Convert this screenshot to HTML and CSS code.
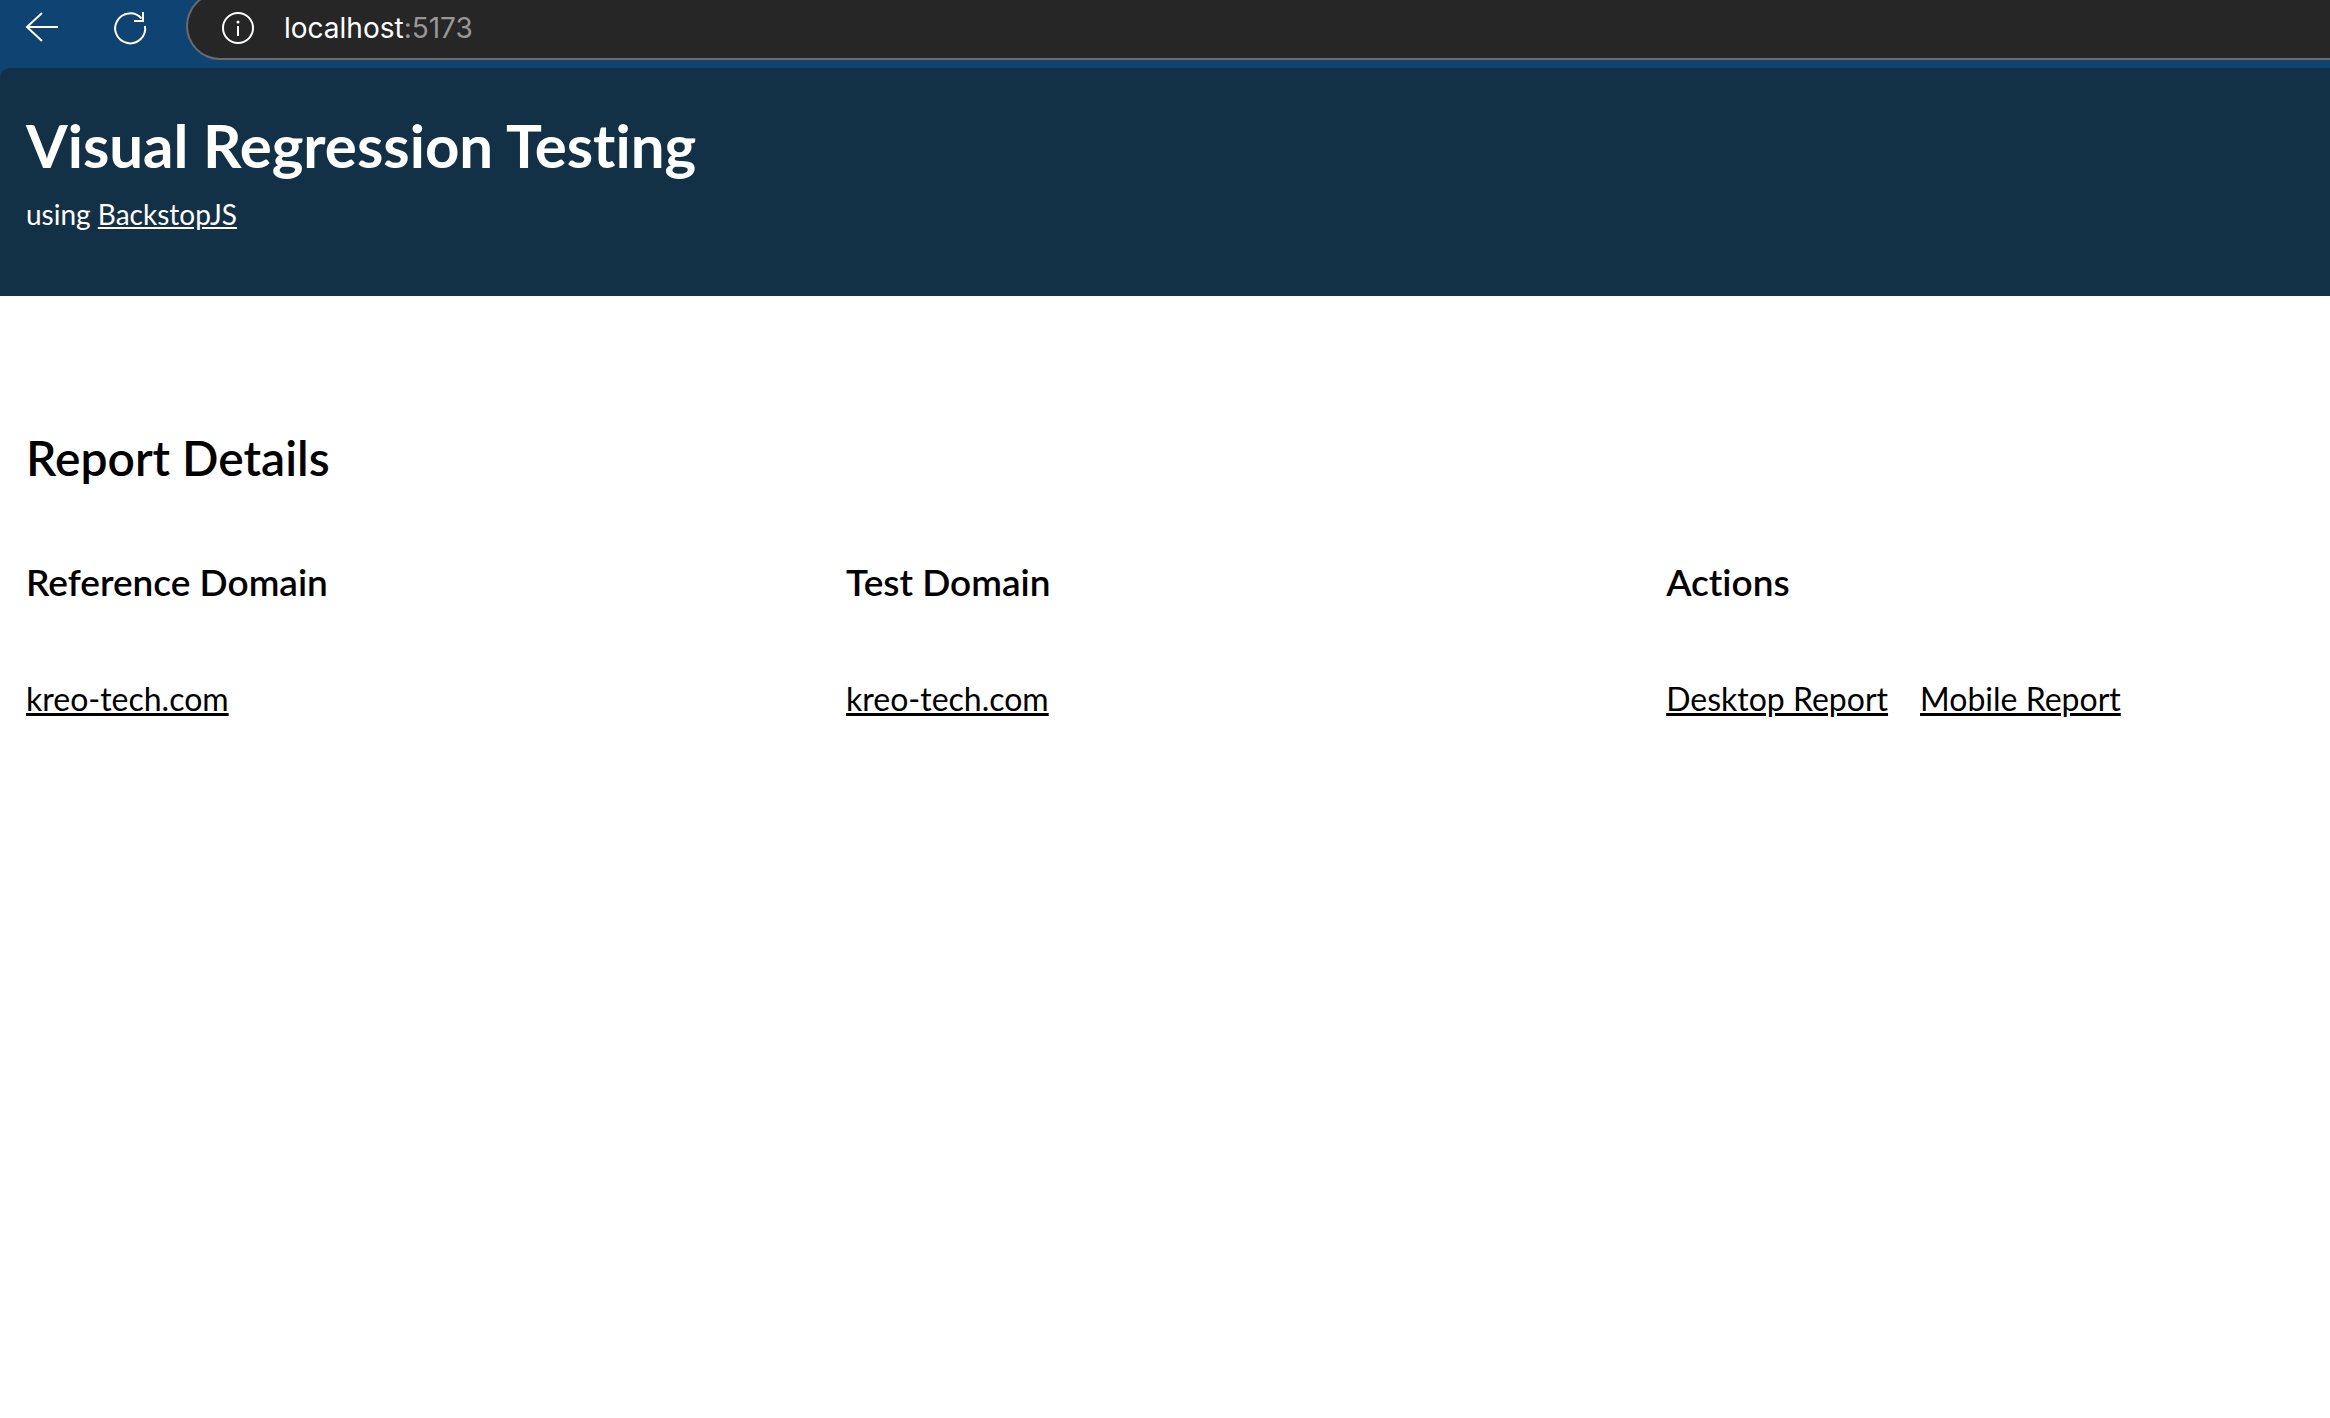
FILE: index.html
```html
<!DOCTYPE html>
<html lang="en">
<head>
<meta charset="utf-8">
<title>Visual Regression Testing</title>
<link rel="stylesheet" href="styles.css">
</head>
<body>
<div class="toolbar">
  <button class="tool" type="button" aria-label="Back">
    <svg width="36" height="36" viewBox="0 0 36 36" fill="none" stroke="currentColor" stroke-width="2"><path d="M34 17H3M18 3 3 17l15 14"/></svg>
  </button>
  <button class="tool" type="button" aria-label="Reload">
    <svg width="36" height="36" viewBox="0 0 36 36" fill="none" stroke="currentColor" stroke-width="2"><path d="M33 16A15 15 0 1 1 29.500 8.500M31 2V11H22"/></svg>
  </button>
  <div class="address">
    <svg width="36" height="36" viewBox="0 0 36 36" fill="none" stroke="currentColor" stroke-width="2"><circle cx="18" cy="18" r="15"/><path d="M18 16v10"/><circle cx="18" cy="12" r="1.500" fill="currentColor" stroke="none"/></svg>
    <span class="url">localhost<span class="port">:5173</span></span>
  </div>
</div>
<header class="banner">
  <h1>Visual Regression Testing</h1>
  <p>using <a href="#backstop">BackstopJS</a></p>
</header>
<main class="report">
  <h2>Report Details</h2>
  <table class="domains">
    <thead>
      <tr><th scope="col">Reference Domain</th><th scope="col">Test Domain</th><th class="actions" scope="col">Actions</th></tr>
    </thead>
    <tbody>
      <tr>
        <td><a href="#reference">kreo-tech.com</a></td>
        <td><a href="#test">kreo-tech.com</a></td>
        <td><div class="links"><a href="#desktop">Desktop Report</a><a href="#mobile">Mobile Report</a></div></td>
      </tr>
    </tbody>
  </table>
</main>
</body>
</html>
```
FILE: styles.css
```css
* { box-sizing: border-box; }

body {
  margin: 0;
  background: #fff;
  color: #000;
  font-family: Lato, "Liberation Sans", sans-serif;
  font-size: 32px;
  font-variant-ligatures: none;
  line-height: 40px;
}

a { color: inherit; }

.toolbar {
  display: flex;
  align-items: flex-start;
  height: 78px;
  padding-left: 24px;
  background: #0f4472;
  color: #fff;
  overflow: hidden;
}

.tool {
  margin: 10px 52px 0 0;
  padding: 0;
  border: 0;
  background: none;
  color: inherit;
}

.tool + .tool { margin-right: 38px; }

.tool svg, .address svg { display: block; }

.address {
  display: flex;
  flex: 1;
  align-items: center;
  gap: 28px;
  height: 68px;
  margin-top: -8px;
  padding: 4px 0 0 32px;
  border: 2px solid #6b6b6b;
  border-right: 0;
  border-radius: 34px 0 0 34px;
  background: #262626;
}

.url {
  font-family: Inter, "Liberation Sans", sans-serif;
  font-size: 28px;
}

.port { color: #979797; }

.banner {
  margin-top: -10px;
  padding: 37px 26px 62px;
  border-top-left-radius: 10px;
  background: #123146;
  color: #fff;
}

h1, h2, p { margin: 0; }

h1 {
  font-size: 60px;
  font-weight: 700;
  line-height: 80px;
}

.banner p {
  margin-top: 9px;
  font-size: 28px;
}

.report { padding: 130px 26px; }

h2 {
  font-size: 48px;
  font-weight: 600;
  line-height: 64px;
}

.domains {
  width: 100%;
  margin-top: 68px;
  border-collapse: collapse;
  table-layout: fixed;
}

th, td {
  width: 36%;
  padding: 0;
  text-align: left;
}

.actions { width: 28%; }

th {
  padding-bottom: 73px;
  font-size: 37px;
  font-weight: 600;
  line-height: 48px;
}

.links {
  display: flex;
  gap: 32px;
}
```
